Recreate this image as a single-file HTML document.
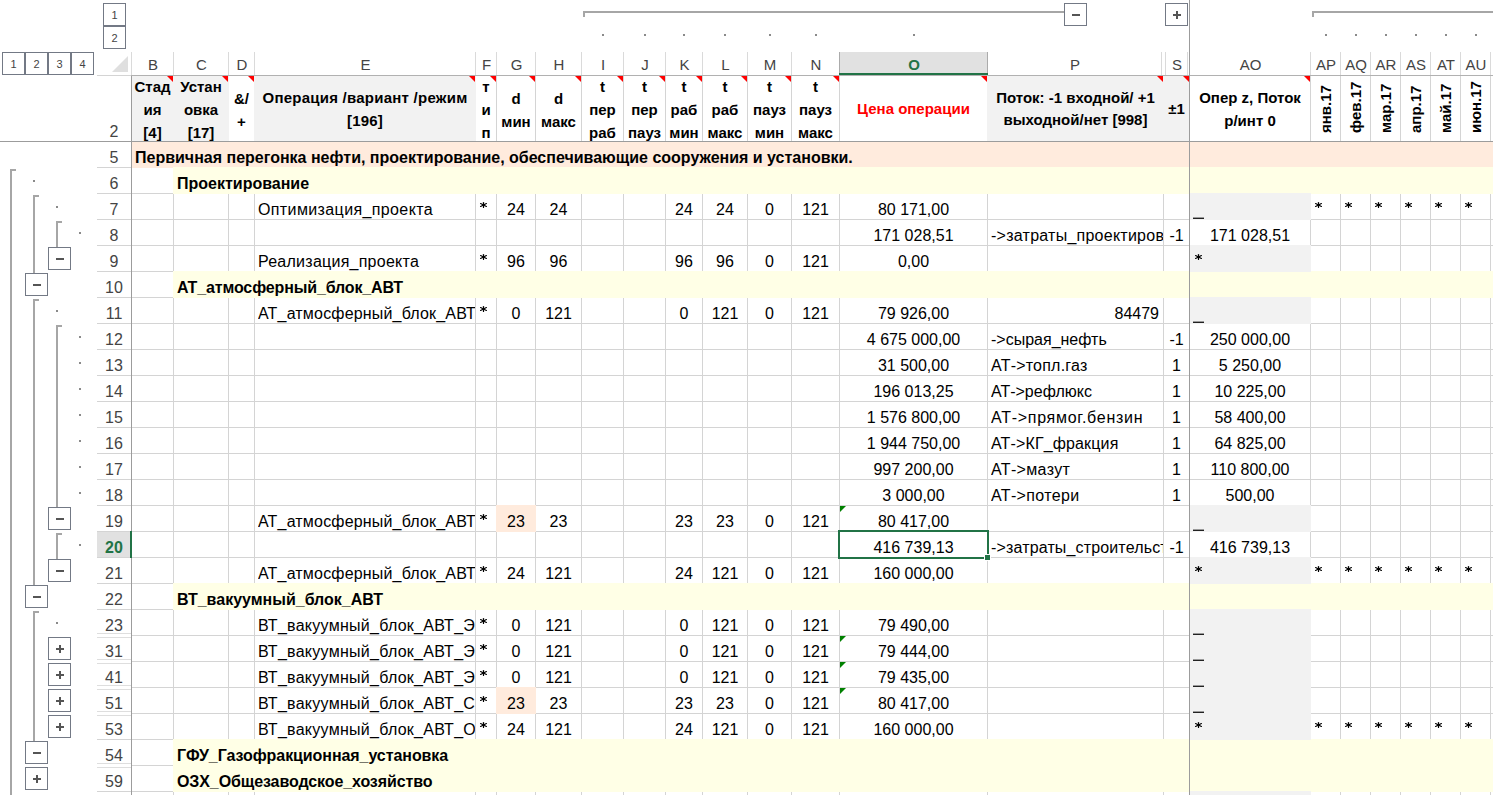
<!DOCTYPE html><html><head><meta charset="utf-8"><style>
*{margin:0;padding:0}
html,body{width:1493px;height:795px;overflow:hidden;background:#fff}
body{position:relative;font-family:"Liberation Sans", sans-serif}
body>div, body>svg{position:absolute}
.st{font-size:21px;line-height:20px;color:#000}
.t{font-size:16px;line-height:20px;white-space:pre;color:#000}
.h{display:flex;align-items:center;justify-content:center;text-align:center;font-weight:bold;white-space:pre}
.rot{font-size:15px;line-height:20px;font-weight:bold;white-space:pre;transform-origin:0 0;transform:rotate(-90deg)}
.ch{top:53px;height:23px;line-height:23px;font-size:15px;text-align:center}
.rh{left:97px;width:34px;height:20px;line-height:20px;font-size:16px;text-align:center;color:#444}
.ob{box-sizing:border-box;border:1px solid #737985;background:#fff;font-size:11px;line-height:21px;padding-top:1px;text-align:center;color:#444}
</style></head><body><div style="left:173px;top:76px;width:1px;height:719px;background:#d4d4d4"></div>
<div style="left:228px;top:76px;width:1px;height:719px;background:#d4d4d4"></div>
<div style="left:254px;top:76px;width:1px;height:719px;background:#d4d4d4"></div>
<div style="left:475px;top:76px;width:1px;height:719px;background:#d4d4d4"></div>
<div style="left:496px;top:76px;width:1px;height:719px;background:#d4d4d4"></div>
<div style="left:535px;top:76px;width:1px;height:719px;background:#d4d4d4"></div>
<div style="left:581px;top:76px;width:1px;height:719px;background:#d4d4d4"></div>
<div style="left:623px;top:76px;width:1px;height:719px;background:#d4d4d4"></div>
<div style="left:665px;top:76px;width:1px;height:719px;background:#d4d4d4"></div>
<div style="left:702px;top:76px;width:1px;height:719px;background:#d4d4d4"></div>
<div style="left:747px;top:76px;width:1px;height:719px;background:#d4d4d4"></div>
<div style="left:791px;top:76px;width:1px;height:719px;background:#d4d4d4"></div>
<div style="left:839px;top:76px;width:1px;height:719px;background:#d4d4d4"></div>
<div style="left:987px;top:76px;width:1px;height:719px;background:#d4d4d4"></div>
<div style="left:1163px;top:76px;width:1px;height:719px;background:#d4d4d4"></div>
<div style="left:1189px;top:76px;width:1px;height:719px;background:#d4d4d4"></div>
<div style="left:1310px;top:76px;width:1px;height:719px;background:#d4d4d4"></div>
<div style="left:1340px;top:76px;width:1px;height:719px;background:#d4d4d4"></div>
<div style="left:1370px;top:76px;width:1px;height:719px;background:#d4d4d4"></div>
<div style="left:1400px;top:76px;width:1px;height:719px;background:#d4d4d4"></div>
<div style="left:1430px;top:76px;width:1px;height:719px;background:#d4d4d4"></div>
<div style="left:1460px;top:76px;width:1px;height:719px;background:#d4d4d4"></div>
<div style="left:1490px;top:76px;width:1px;height:719px;background:#d4d4d4"></div>
<div style="left:1520px;top:76px;width:1px;height:719px;background:#d4d4d4"></div>
<div style="left:131px;top:167px;width:1362px;height:1px;background:#d4d4d4"></div>
<div style="left:131px;top:193px;width:1362px;height:1px;background:#d4d4d4"></div>
<div style="left:131px;top:219px;width:1362px;height:1px;background:#d4d4d4"></div>
<div style="left:131px;top:245px;width:1362px;height:1px;background:#d4d4d4"></div>
<div style="left:131px;top:271px;width:1362px;height:1px;background:#d4d4d4"></div>
<div style="left:131px;top:297px;width:1362px;height:1px;background:#d4d4d4"></div>
<div style="left:131px;top:323px;width:1362px;height:1px;background:#d4d4d4"></div>
<div style="left:131px;top:349px;width:1362px;height:1px;background:#d4d4d4"></div>
<div style="left:131px;top:375px;width:1362px;height:1px;background:#d4d4d4"></div>
<div style="left:131px;top:401px;width:1362px;height:1px;background:#d4d4d4"></div>
<div style="left:131px;top:427px;width:1362px;height:1px;background:#d4d4d4"></div>
<div style="left:131px;top:453px;width:1362px;height:1px;background:#d4d4d4"></div>
<div style="left:131px;top:479px;width:1362px;height:1px;background:#d4d4d4"></div>
<div style="left:131px;top:505px;width:1362px;height:1px;background:#d4d4d4"></div>
<div style="left:131px;top:531px;width:1362px;height:1px;background:#d4d4d4"></div>
<div style="left:131px;top:557px;width:1362px;height:1px;background:#d4d4d4"></div>
<div style="left:131px;top:583px;width:1362px;height:1px;background:#d4d4d4"></div>
<div style="left:131px;top:609px;width:1362px;height:1px;background:#d4d4d4"></div>
<div style="left:131px;top:635px;width:1362px;height:1px;background:#d4d4d4"></div>
<div style="left:131px;top:661px;width:1362px;height:1px;background:#d4d4d4"></div>
<div style="left:131px;top:687px;width:1362px;height:1px;background:#d4d4d4"></div>
<div style="left:131px;top:713px;width:1362px;height:1px;background:#d4d4d4"></div>
<div style="left:131px;top:739px;width:1362px;height:1px;background:#d4d4d4"></div>
<div style="left:131px;top:765px;width:1362px;height:1px;background:#d4d4d4"></div>
<div style="left:131px;top:791px;width:1362px;height:1px;background:#d4d4d4"></div>
<div style="left:131px;top:817px;width:1362px;height:1px;background:#d4d4d4"></div>
<div style="left:131px;top:76px;width:98px;height:65px;background:#f2f2f2"></div>
<div style="left:254px;top:76px;width:222px;height:65px;background:#f2f2f2"></div>
<div style="left:987px;top:76px;width:203px;height:65px;background:#f2f2f2"></div>
<div style="left:132px;top:141px;width:1361px;height:27px;background:#ffebdd"></div>
<div style="left:173px;top:167px;width:1348px;height:27px;background:#ffffe6"></div>
<div style="left:173px;top:271px;width:1348px;height:27px;background:#ffffe6"></div>
<div style="left:173px;top:583px;width:1348px;height:27px;background:#ffffe6"></div>
<div style="left:173px;top:739px;width:1348px;height:27px;background:#ffffe6"></div>
<div style="left:173px;top:765px;width:1348px;height:27px;background:#ffffe6"></div>
<div style="left:1189px;top:193px;width:122px;height:27px;background:#f2f2f2"></div>
<div style="left:1189px;top:245px;width:122px;height:27px;background:#f2f2f2"></div>
<div style="left:1189px;top:297px;width:122px;height:27px;background:#f2f2f2"></div>
<div style="left:1189px;top:505px;width:122px;height:27px;background:#f2f2f2"></div>
<div style="left:1189px;top:557px;width:122px;height:27px;background:#f2f2f2"></div>
<div style="left:1189px;top:713px;width:122px;height:27px;background:#f2f2f2"></div>
<div style="left:1189px;top:609px;width:122px;height:105px;background:#f2f2f2"></div>
<div style="left:1189px;top:791px;width:122px;height:27px;background:#f2f2f2"></div>
<div style="left:496px;top:505px;width:40px;height:27px;background:#ffebdd"></div>
<div style="left:496px;top:687px;width:40px;height:27px;background:#ffebdd"></div>
<div class="t" style="left:135px;top:148px;font-weight:bold;">Первичная перегонка нефти, проектирование, обеспечивающие сооружения и установки.</div>
<div class="t" style="left:177px;top:174px;font-weight:bold;letter-spacing:0px">Проектирование</div>
<div class="t" style="left:177px;top:278px;font-weight:bold;letter-spacing:-0.14px">АТ_атмосферный_блок_АВТ</div>
<div class="t" style="left:177px;top:590px;font-weight:bold;letter-spacing:0px">ВТ_вакуумный_блок_АВТ</div>
<div class="t" style="left:177px;top:746px;font-weight:bold;letter-spacing:-0.07px">ГФУ_Газофракционная_установка</div>
<div class="t" style="left:177px;top:772px;font-weight:bold;letter-spacing:-0.1px">ОЗХ_Общезаводское_хозяйство</div>
<div class="t" style="left:258px;top:200px;width:217px;overflow:hidden;letter-spacing:0.38px;">Оптимизация_проекта</div>
<svg style="position:absolute;left:478px;top:200px" width="11" height="10"><g stroke="#000" stroke-width="1.2" stroke-linecap="round"><line x1="5.5" y1="2.5" x2="5.5" y2="7.5"/><line x1="2.6" y1="3.55" x2="8.4" y2="6.45"/><line x1="2.6" y1="6.45" x2="8.4" y2="3.55"/></g></svg>
<div class="t" style="left:496px;top:200px;width:40px;text-align:center;">24</div>
<div class="t" style="left:535px;top:200px;width:47px;text-align:center;">24</div>
<div class="t" style="left:665px;top:200px;width:38px;text-align:center;">24</div>
<div class="t" style="left:702px;top:200px;width:46px;text-align:center;">24</div>
<div class="t" style="left:747px;top:200px;width:45px;text-align:center;">0</div>
<div class="t" style="left:791px;top:200px;width:49px;text-align:center;">121</div>
<div class="t" style="left:839px;top:200px;width:149px;text-align:center;">80 171,00</div>
<div style="left:1193px;top:217px;width:11px;height:1px;background:#9a9a9a"></div>
<div style="left:1193px;top:218px;width:11px;height:1px;background:#222"></div>
<div class="t" style="left:258px;top:252px;width:217px;overflow:hidden;letter-spacing:0.25px;">Реализация_проекта</div>
<svg style="position:absolute;left:478px;top:252px" width="11" height="10"><g stroke="#000" stroke-width="1.2" stroke-linecap="round"><line x1="5.5" y1="2.5" x2="5.5" y2="7.5"/><line x1="2.6" y1="3.55" x2="8.4" y2="6.45"/><line x1="2.6" y1="6.45" x2="8.4" y2="3.55"/></g></svg>
<div class="t" style="left:496px;top:252px;width:40px;text-align:center;">96</div>
<div class="t" style="left:535px;top:252px;width:47px;text-align:center;">96</div>
<div class="t" style="left:665px;top:252px;width:38px;text-align:center;">96</div>
<div class="t" style="left:702px;top:252px;width:46px;text-align:center;">96</div>
<div class="t" style="left:747px;top:252px;width:45px;text-align:center;">0</div>
<div class="t" style="left:791px;top:252px;width:49px;text-align:center;">121</div>
<div class="t" style="left:839px;top:252px;width:149px;text-align:center;">0,00</div>
<svg style="position:absolute;left:1193px;top:252px" width="11" height="10"><g stroke="#000" stroke-width="1.2" stroke-linecap="round"><line x1="5.5" y1="2.5" x2="5.5" y2="7.5"/><line x1="2.6" y1="3.55" x2="8.4" y2="6.45"/><line x1="2.6" y1="6.45" x2="8.4" y2="3.55"/></g></svg>
<div class="t" style="left:258px;top:304px;width:217px;overflow:hidden;letter-spacing:0.18px;">АТ_атмосферный_блок_АВТ</div>
<svg style="position:absolute;left:478px;top:304px" width="11" height="10"><g stroke="#000" stroke-width="1.2" stroke-linecap="round"><line x1="5.5" y1="2.5" x2="5.5" y2="7.5"/><line x1="2.6" y1="3.55" x2="8.4" y2="6.45"/><line x1="2.6" y1="6.45" x2="8.4" y2="3.55"/></g></svg>
<div class="t" style="left:496px;top:304px;width:40px;text-align:center;">0</div>
<div class="t" style="left:535px;top:304px;width:47px;text-align:center;">121</div>
<div class="t" style="left:665px;top:304px;width:38px;text-align:center;">0</div>
<div class="t" style="left:702px;top:304px;width:46px;text-align:center;">121</div>
<div class="t" style="left:747px;top:304px;width:45px;text-align:center;">0</div>
<div class="t" style="left:791px;top:304px;width:49px;text-align:center;">121</div>
<div class="t" style="left:839px;top:304px;width:149px;text-align:center;">79 926,00</div>
<div style="left:1193px;top:321px;width:11px;height:1px;background:#9a9a9a"></div>
<div style="left:1193px;top:322px;width:11px;height:1px;background:#222"></div>
<div class="t" style="left:258px;top:512px;width:217px;overflow:hidden;letter-spacing:0.18px;">АТ_атмосферный_блок_АВТ</div>
<svg style="position:absolute;left:478px;top:512px" width="11" height="10"><g stroke="#000" stroke-width="1.2" stroke-linecap="round"><line x1="5.5" y1="2.5" x2="5.5" y2="7.5"/><line x1="2.6" y1="3.55" x2="8.4" y2="6.45"/><line x1="2.6" y1="6.45" x2="8.4" y2="3.55"/></g></svg>
<div class="t" style="left:496px;top:512px;width:40px;text-align:center;">23</div>
<div class="t" style="left:535px;top:512px;width:47px;text-align:center;">23</div>
<div class="t" style="left:665px;top:512px;width:38px;text-align:center;">23</div>
<div class="t" style="left:702px;top:512px;width:46px;text-align:center;">23</div>
<div class="t" style="left:747px;top:512px;width:45px;text-align:center;">0</div>
<div class="t" style="left:791px;top:512px;width:49px;text-align:center;">121</div>
<div class="t" style="left:839px;top:512px;width:149px;text-align:center;">80 417,00</div>
<div style="left:1193px;top:529px;width:11px;height:1px;background:#9a9a9a"></div>
<div style="left:1193px;top:530px;width:11px;height:1px;background:#222"></div>
<div class="t" style="left:258px;top:564px;width:217px;overflow:hidden;letter-spacing:0.18px;">АТ_атмосферный_блок_АВТ</div>
<svg style="position:absolute;left:478px;top:564px" width="11" height="10"><g stroke="#000" stroke-width="1.2" stroke-linecap="round"><line x1="5.5" y1="2.5" x2="5.5" y2="7.5"/><line x1="2.6" y1="3.55" x2="8.4" y2="6.45"/><line x1="2.6" y1="6.45" x2="8.4" y2="3.55"/></g></svg>
<div class="t" style="left:496px;top:564px;width:40px;text-align:center;">24</div>
<div class="t" style="left:535px;top:564px;width:47px;text-align:center;">121</div>
<div class="t" style="left:665px;top:564px;width:38px;text-align:center;">24</div>
<div class="t" style="left:702px;top:564px;width:46px;text-align:center;">121</div>
<div class="t" style="left:747px;top:564px;width:45px;text-align:center;">0</div>
<div class="t" style="left:791px;top:564px;width:49px;text-align:center;">121</div>
<div class="t" style="left:839px;top:564px;width:149px;text-align:center;">160 000,00</div>
<svg style="position:absolute;left:1193px;top:564px" width="11" height="10"><g stroke="#000" stroke-width="1.2" stroke-linecap="round"><line x1="5.5" y1="2.5" x2="5.5" y2="7.5"/><line x1="2.6" y1="3.55" x2="8.4" y2="6.45"/><line x1="2.6" y1="6.45" x2="8.4" y2="3.55"/></g></svg>
<div class="t" style="left:258px;top:616px;width:217px;overflow:hidden;letter-spacing:0.27px;">ВТ_вакуумный_блок_АВТ_Э</div>
<svg style="position:absolute;left:478px;top:616px" width="11" height="10"><g stroke="#000" stroke-width="1.2" stroke-linecap="round"><line x1="5.5" y1="2.5" x2="5.5" y2="7.5"/><line x1="2.6" y1="3.55" x2="8.4" y2="6.45"/><line x1="2.6" y1="6.45" x2="8.4" y2="3.55"/></g></svg>
<div class="t" style="left:496px;top:616px;width:40px;text-align:center;">0</div>
<div class="t" style="left:535px;top:616px;width:47px;text-align:center;">121</div>
<div class="t" style="left:665px;top:616px;width:38px;text-align:center;">0</div>
<div class="t" style="left:702px;top:616px;width:46px;text-align:center;">121</div>
<div class="t" style="left:747px;top:616px;width:45px;text-align:center;">0</div>
<div class="t" style="left:791px;top:616px;width:49px;text-align:center;">121</div>
<div class="t" style="left:839px;top:616px;width:149px;text-align:center;">79 490,00</div>
<div style="left:1193px;top:633px;width:11px;height:1px;background:#9a9a9a"></div>
<div style="left:1193px;top:634px;width:11px;height:1px;background:#222"></div>
<div class="t" style="left:258px;top:642px;width:217px;overflow:hidden;letter-spacing:0.27px;">ВТ_вакуумный_блок_АВТ_Э</div>
<svg style="position:absolute;left:478px;top:642px" width="11" height="10"><g stroke="#000" stroke-width="1.2" stroke-linecap="round"><line x1="5.5" y1="2.5" x2="5.5" y2="7.5"/><line x1="2.6" y1="3.55" x2="8.4" y2="6.45"/><line x1="2.6" y1="6.45" x2="8.4" y2="3.55"/></g></svg>
<div class="t" style="left:496px;top:642px;width:40px;text-align:center;">0</div>
<div class="t" style="left:535px;top:642px;width:47px;text-align:center;">121</div>
<div class="t" style="left:665px;top:642px;width:38px;text-align:center;">0</div>
<div class="t" style="left:702px;top:642px;width:46px;text-align:center;">121</div>
<div class="t" style="left:747px;top:642px;width:45px;text-align:center;">0</div>
<div class="t" style="left:791px;top:642px;width:49px;text-align:center;">121</div>
<div class="t" style="left:839px;top:642px;width:149px;text-align:center;">79 444,00</div>
<div style="left:1193px;top:659px;width:11px;height:1px;background:#9a9a9a"></div>
<div style="left:1193px;top:660px;width:11px;height:1px;background:#222"></div>
<div class="t" style="left:258px;top:668px;width:217px;overflow:hidden;letter-spacing:0.27px;">ВТ_вакуумный_блок_АВТ_Э</div>
<svg style="position:absolute;left:478px;top:668px" width="11" height="10"><g stroke="#000" stroke-width="1.2" stroke-linecap="round"><line x1="5.5" y1="2.5" x2="5.5" y2="7.5"/><line x1="2.6" y1="3.55" x2="8.4" y2="6.45"/><line x1="2.6" y1="6.45" x2="8.4" y2="3.55"/></g></svg>
<div class="t" style="left:496px;top:668px;width:40px;text-align:center;">0</div>
<div class="t" style="left:535px;top:668px;width:47px;text-align:center;">121</div>
<div class="t" style="left:665px;top:668px;width:38px;text-align:center;">0</div>
<div class="t" style="left:702px;top:668px;width:46px;text-align:center;">121</div>
<div class="t" style="left:747px;top:668px;width:45px;text-align:center;">0</div>
<div class="t" style="left:791px;top:668px;width:49px;text-align:center;">121</div>
<div class="t" style="left:839px;top:668px;width:149px;text-align:center;">79 435,00</div>
<div style="left:1193px;top:685px;width:11px;height:1px;background:#9a9a9a"></div>
<div style="left:1193px;top:686px;width:11px;height:1px;background:#222"></div>
<div class="t" style="left:258px;top:694px;width:217px;overflow:hidden;letter-spacing:0.27px;">ВТ_вакуумный_блок_АВТ_С</div>
<svg style="position:absolute;left:478px;top:694px" width="11" height="10"><g stroke="#000" stroke-width="1.2" stroke-linecap="round"><line x1="5.5" y1="2.5" x2="5.5" y2="7.5"/><line x1="2.6" y1="3.55" x2="8.4" y2="6.45"/><line x1="2.6" y1="6.45" x2="8.4" y2="3.55"/></g></svg>
<div class="t" style="left:496px;top:694px;width:40px;text-align:center;">23</div>
<div class="t" style="left:535px;top:694px;width:47px;text-align:center;">23</div>
<div class="t" style="left:665px;top:694px;width:38px;text-align:center;">23</div>
<div class="t" style="left:702px;top:694px;width:46px;text-align:center;">23</div>
<div class="t" style="left:747px;top:694px;width:45px;text-align:center;">0</div>
<div class="t" style="left:791px;top:694px;width:49px;text-align:center;">121</div>
<div class="t" style="left:839px;top:694px;width:149px;text-align:center;">80 417,00</div>
<div style="left:1193px;top:711px;width:11px;height:1px;background:#9a9a9a"></div>
<div style="left:1193px;top:712px;width:11px;height:1px;background:#222"></div>
<div class="t" style="left:258px;top:720px;width:217px;overflow:hidden;letter-spacing:0.27px;">ВТ_вакуумный_блок_АВТ_О</div>
<svg style="position:absolute;left:478px;top:720px" width="11" height="10"><g stroke="#000" stroke-width="1.2" stroke-linecap="round"><line x1="5.5" y1="2.5" x2="5.5" y2="7.5"/><line x1="2.6" y1="3.55" x2="8.4" y2="6.45"/><line x1="2.6" y1="6.45" x2="8.4" y2="3.55"/></g></svg>
<div class="t" style="left:496px;top:720px;width:40px;text-align:center;">24</div>
<div class="t" style="left:535px;top:720px;width:47px;text-align:center;">121</div>
<div class="t" style="left:665px;top:720px;width:38px;text-align:center;">24</div>
<div class="t" style="left:702px;top:720px;width:46px;text-align:center;">121</div>
<div class="t" style="left:747px;top:720px;width:45px;text-align:center;">0</div>
<div class="t" style="left:791px;top:720px;width:49px;text-align:center;">121</div>
<div class="t" style="left:839px;top:720px;width:149px;text-align:center;">160 000,00</div>
<svg style="position:absolute;left:1193px;top:720px" width="11" height="10"><g stroke="#000" stroke-width="1.2" stroke-linecap="round"><line x1="5.5" y1="2.5" x2="5.5" y2="7.5"/><line x1="2.6" y1="3.55" x2="8.4" y2="6.45"/><line x1="2.6" y1="6.45" x2="8.4" y2="3.55"/></g></svg>
<div class="t" style="left:987px;top:304px;width:172px;text-align:right;">84479</div>
<svg style="position:absolute;left:1313px;top:200px" width="11" height="10"><g stroke="#000" stroke-width="1.2" stroke-linecap="round"><line x1="5.5" y1="2.5" x2="5.5" y2="7.5"/><line x1="2.6" y1="3.55" x2="8.4" y2="6.45"/><line x1="2.6" y1="6.45" x2="8.4" y2="3.55"/></g></svg>
<svg style="position:absolute;left:1343px;top:200px" width="11" height="10"><g stroke="#000" stroke-width="1.2" stroke-linecap="round"><line x1="5.5" y1="2.5" x2="5.5" y2="7.5"/><line x1="2.6" y1="3.55" x2="8.4" y2="6.45"/><line x1="2.6" y1="6.45" x2="8.4" y2="3.55"/></g></svg>
<svg style="position:absolute;left:1373px;top:200px" width="11" height="10"><g stroke="#000" stroke-width="1.2" stroke-linecap="round"><line x1="5.5" y1="2.5" x2="5.5" y2="7.5"/><line x1="2.6" y1="3.55" x2="8.4" y2="6.45"/><line x1="2.6" y1="6.45" x2="8.4" y2="3.55"/></g></svg>
<svg style="position:absolute;left:1403px;top:200px" width="11" height="10"><g stroke="#000" stroke-width="1.2" stroke-linecap="round"><line x1="5.5" y1="2.5" x2="5.5" y2="7.5"/><line x1="2.6" y1="3.55" x2="8.4" y2="6.45"/><line x1="2.6" y1="6.45" x2="8.4" y2="3.55"/></g></svg>
<svg style="position:absolute;left:1433px;top:200px" width="11" height="10"><g stroke="#000" stroke-width="1.2" stroke-linecap="round"><line x1="5.5" y1="2.5" x2="5.5" y2="7.5"/><line x1="2.6" y1="3.55" x2="8.4" y2="6.45"/><line x1="2.6" y1="6.45" x2="8.4" y2="3.55"/></g></svg>
<svg style="position:absolute;left:1463px;top:200px" width="11" height="10"><g stroke="#000" stroke-width="1.2" stroke-linecap="round"><line x1="5.5" y1="2.5" x2="5.5" y2="7.5"/><line x1="2.6" y1="3.55" x2="8.4" y2="6.45"/><line x1="2.6" y1="6.45" x2="8.4" y2="3.55"/></g></svg>
<svg style="position:absolute;left:1313px;top:564px" width="11" height="10"><g stroke="#000" stroke-width="1.2" stroke-linecap="round"><line x1="5.5" y1="2.5" x2="5.5" y2="7.5"/><line x1="2.6" y1="3.55" x2="8.4" y2="6.45"/><line x1="2.6" y1="6.45" x2="8.4" y2="3.55"/></g></svg>
<svg style="position:absolute;left:1343px;top:564px" width="11" height="10"><g stroke="#000" stroke-width="1.2" stroke-linecap="round"><line x1="5.5" y1="2.5" x2="5.5" y2="7.5"/><line x1="2.6" y1="3.55" x2="8.4" y2="6.45"/><line x1="2.6" y1="6.45" x2="8.4" y2="3.55"/></g></svg>
<svg style="position:absolute;left:1373px;top:564px" width="11" height="10"><g stroke="#000" stroke-width="1.2" stroke-linecap="round"><line x1="5.5" y1="2.5" x2="5.5" y2="7.5"/><line x1="2.6" y1="3.55" x2="8.4" y2="6.45"/><line x1="2.6" y1="6.45" x2="8.4" y2="3.55"/></g></svg>
<svg style="position:absolute;left:1403px;top:564px" width="11" height="10"><g stroke="#000" stroke-width="1.2" stroke-linecap="round"><line x1="5.5" y1="2.5" x2="5.5" y2="7.5"/><line x1="2.6" y1="3.55" x2="8.4" y2="6.45"/><line x1="2.6" y1="6.45" x2="8.4" y2="3.55"/></g></svg>
<svg style="position:absolute;left:1433px;top:564px" width="11" height="10"><g stroke="#000" stroke-width="1.2" stroke-linecap="round"><line x1="5.5" y1="2.5" x2="5.5" y2="7.5"/><line x1="2.6" y1="3.55" x2="8.4" y2="6.45"/><line x1="2.6" y1="6.45" x2="8.4" y2="3.55"/></g></svg>
<svg style="position:absolute;left:1463px;top:564px" width="11" height="10"><g stroke="#000" stroke-width="1.2" stroke-linecap="round"><line x1="5.5" y1="2.5" x2="5.5" y2="7.5"/><line x1="2.6" y1="3.55" x2="8.4" y2="6.45"/><line x1="2.6" y1="6.45" x2="8.4" y2="3.55"/></g></svg>
<svg style="position:absolute;left:1313px;top:720px" width="11" height="10"><g stroke="#000" stroke-width="1.2" stroke-linecap="round"><line x1="5.5" y1="2.5" x2="5.5" y2="7.5"/><line x1="2.6" y1="3.55" x2="8.4" y2="6.45"/><line x1="2.6" y1="6.45" x2="8.4" y2="3.55"/></g></svg>
<svg style="position:absolute;left:1343px;top:720px" width="11" height="10"><g stroke="#000" stroke-width="1.2" stroke-linecap="round"><line x1="5.5" y1="2.5" x2="5.5" y2="7.5"/><line x1="2.6" y1="3.55" x2="8.4" y2="6.45"/><line x1="2.6" y1="6.45" x2="8.4" y2="3.55"/></g></svg>
<svg style="position:absolute;left:1373px;top:720px" width="11" height="10"><g stroke="#000" stroke-width="1.2" stroke-linecap="round"><line x1="5.5" y1="2.5" x2="5.5" y2="7.5"/><line x1="2.6" y1="3.55" x2="8.4" y2="6.45"/><line x1="2.6" y1="6.45" x2="8.4" y2="3.55"/></g></svg>
<svg style="position:absolute;left:1403px;top:720px" width="11" height="10"><g stroke="#000" stroke-width="1.2" stroke-linecap="round"><line x1="5.5" y1="2.5" x2="5.5" y2="7.5"/><line x1="2.6" y1="3.55" x2="8.4" y2="6.45"/><line x1="2.6" y1="6.45" x2="8.4" y2="3.55"/></g></svg>
<svg style="position:absolute;left:1433px;top:720px" width="11" height="10"><g stroke="#000" stroke-width="1.2" stroke-linecap="round"><line x1="5.5" y1="2.5" x2="5.5" y2="7.5"/><line x1="2.6" y1="3.55" x2="8.4" y2="6.45"/><line x1="2.6" y1="6.45" x2="8.4" y2="3.55"/></g></svg>
<svg style="position:absolute;left:1463px;top:720px" width="11" height="10"><g stroke="#000" stroke-width="1.2" stroke-linecap="round"><line x1="5.5" y1="2.5" x2="5.5" y2="7.5"/><line x1="2.6" y1="3.55" x2="8.4" y2="6.45"/><line x1="2.6" y1="6.45" x2="8.4" y2="3.55"/></g></svg>
<div class="t" style="left:839px;top:226px;width:149px;text-align:center;">171 028,51</div>
<div class="t" style="left:991px;top:226px;width:172px;overflow:hidden;letter-spacing:0.25px;">-&gt;затраты_проектирование</div>
<div class="t" style="left:1163px;top:226px;width:27px;text-align:center;">-1</div>
<div class="t" style="left:1189px;top:226px;width:122px;text-align:center;">171 028,51</div>
<div class="t" style="left:839px;top:330px;width:149px;text-align:center;">4 675 000,00</div>
<div class="t" style="left:991px;top:330px;width:172px;overflow:hidden;">-&gt;сырая_нефть</div>
<div class="t" style="left:1163px;top:330px;width:27px;text-align:center;">-1</div>
<div class="t" style="left:1189px;top:330px;width:122px;text-align:center;">250 000,00</div>
<div class="t" style="left:839px;top:356px;width:149px;text-align:center;">31 500,00</div>
<div class="t" style="left:991px;top:356px;width:172px;overflow:hidden;letter-spacing:0.22px;">АТ-&gt;топл.газ</div>
<div class="t" style="left:1163px;top:356px;width:27px;text-align:center;">1</div>
<div class="t" style="left:1189px;top:356px;width:122px;text-align:center;">5 250,00</div>
<div class="t" style="left:839px;top:382px;width:149px;text-align:center;">196 013,25</div>
<div class="t" style="left:991px;top:382px;width:172px;overflow:hidden;">АТ-&gt;рефлюкс</div>
<div class="t" style="left:1163px;top:382px;width:27px;text-align:center;">1</div>
<div class="t" style="left:1189px;top:382px;width:122px;text-align:center;">10 225,00</div>
<div class="t" style="left:839px;top:408px;width:149px;text-align:center;">1 576 800,00</div>
<div class="t" style="left:991px;top:408px;width:172px;overflow:hidden;letter-spacing:0.72px;">АТ-&gt;прямог.бензин</div>
<div class="t" style="left:1163px;top:408px;width:27px;text-align:center;">1</div>
<div class="t" style="left:1189px;top:408px;width:122px;text-align:center;">58 400,00</div>
<div class="t" style="left:839px;top:434px;width:149px;text-align:center;">1 944 750,00</div>
<div class="t" style="left:991px;top:434px;width:172px;overflow:hidden;letter-spacing:0.14px;">АТ-&gt;КГ_фракция</div>
<div class="t" style="left:1163px;top:434px;width:27px;text-align:center;">1</div>
<div class="t" style="left:1189px;top:434px;width:122px;text-align:center;">64 825,00</div>
<div class="t" style="left:839px;top:460px;width:149px;text-align:center;">997 200,00</div>
<div class="t" style="left:991px;top:460px;width:172px;overflow:hidden;letter-spacing:0.35px;">АТ-&gt;мазут</div>
<div class="t" style="left:1163px;top:460px;width:27px;text-align:center;">1</div>
<div class="t" style="left:1189px;top:460px;width:122px;text-align:center;">110 800,00</div>
<div class="t" style="left:839px;top:486px;width:149px;text-align:center;">3 000,00</div>
<div class="t" style="left:991px;top:486px;width:172px;overflow:hidden;letter-spacing:0.35px;">АТ-&gt;потери</div>
<div class="t" style="left:1163px;top:486px;width:27px;text-align:center;">1</div>
<div class="t" style="left:1189px;top:486px;width:122px;text-align:center;">500,00</div>
<div class="t" style="left:839px;top:538px;width:149px;text-align:center;">416 739,13</div>
<div class="t" style="left:991px;top:538px;width:172px;overflow:hidden;letter-spacing:0.15px;">-&gt;затраты_строительство</div>
<div class="t" style="left:1163px;top:538px;width:27px;text-align:center;">-1</div>
<div class="t" style="left:1189px;top:538px;width:122px;text-align:center;">416 739,13</div>
<div class="h" style="left:131px;top:77px;width:43px;height:65px;font-size:15px;line-height:23px;color:#000;"><div>Стад<br>ия<br>[4]</div></div>
<div class="h" style="left:173px;top:77px;width:56px;height:65px;font-size:15px;line-height:23px;color:#000;"><div>Устан<br>овка<br>[17]</div></div>
<div class="h" style="left:228px;top:77px;width:27px;height:65px;font-size:15px;line-height:23px;color:#000;"><div>&amp;/<br>+</div></div>
<div class="h" style="left:254px;top:77px;width:222px;height:65px;font-size:15px;line-height:22.5px;color:#000;letter-spacing:0.24px"><div>Операция /вариант /режим<br>[196]</div></div>
<div class="h" style="left:475px;top:77px;width:22px;height:65px;font-size:15px;line-height:23px;color:#000;"><div>т<br>и<br>п</div></div>
<div class="h" style="left:496px;top:77px;width:40px;height:65px;font-size:15px;line-height:23px;color:#000;"><div>d<br>мин</div></div>
<div class="h" style="left:535px;top:77px;width:47px;height:65px;font-size:15px;line-height:23px;color:#000;"><div>d<br>макс</div></div>
<div class="h" style="left:581px;top:77px;width:43px;height:65px;font-size:15px;line-height:23px;color:#000;"><div>t<br>пер<br>раб</div></div>
<div class="h" style="left:623px;top:77px;width:43px;height:65px;font-size:15px;line-height:23px;color:#000;"><div>t<br>пер<br>пауз</div></div>
<div class="h" style="left:665px;top:77px;width:38px;height:65px;font-size:15px;line-height:23px;color:#000;"><div>t<br>раб<br>мин</div></div>
<div class="h" style="left:702px;top:77px;width:46px;height:65px;font-size:15px;line-height:23px;color:#000;"><div>t<br>раб<br>макс</div></div>
<div class="h" style="left:747px;top:77px;width:45px;height:65px;font-size:15px;line-height:23px;color:#000;"><div>t<br>пауз<br>мин</div></div>
<div class="h" style="left:791px;top:77px;width:49px;height:65px;font-size:15px;line-height:23px;color:#000;"><div>t<br>пауз<br>макс</div></div>
<div class="h" style="left:839px;top:76px;width:149px;height:65px;font-size:15px;line-height:23px;color:#ff0000;"><div>Цена операции</div></div>
<div class="h" style="left:987px;top:76px;width:177px;height:65px;font-size:15px;line-height:21.5px;color:#000;"><div>Поток: -1 входной/ +1<br>выходной/нет [998]</div></div>
<div class="h" style="left:1163px;top:76px;width:27px;height:65px;font-size:15px;line-height:23px;color:#000;"><div>±1</div></div>
<div class="h" style="left:1189px;top:76px;width:122px;height:65px;font-size:15px;line-height:23px;color:#000;"><div>Опер z, Поток<br>р/инт 0</div></div>
<div class="rot" style="left:1316px;top:133px;">янв.17</div>
<div class="rot" style="left:1346px;top:133px;">фев.17</div>
<div class="rot" style="left:1376px;top:133px;">мар.17</div>
<div class="rot" style="left:1406px;top:133px;">апр.17</div>
<div class="rot" style="left:1436px;top:133px;">май.17</div>
<div class="rot" style="left:1466px;top:133px;">июн.17</div>
<div style="left:0px;top:52px;width:1493px;height:23px;background:#fff"></div>
<div style="left:839px;top:52px;width:148px;height:23px;background:#e1e1e1"></div>
<div style="left:173px;top:52px;width:1px;height:23px;background:#dadada"></div>
<div style="left:228px;top:52px;width:1px;height:23px;background:#dadada"></div>
<div style="left:254px;top:52px;width:1px;height:23px;background:#dadada"></div>
<div style="left:475px;top:52px;width:1px;height:23px;background:#dadada"></div>
<div style="left:496px;top:52px;width:1px;height:23px;background:#dadada"></div>
<div style="left:535px;top:52px;width:1px;height:23px;background:#dadada"></div>
<div style="left:581px;top:52px;width:1px;height:23px;background:#dadada"></div>
<div style="left:623px;top:52px;width:1px;height:23px;background:#dadada"></div>
<div style="left:665px;top:52px;width:1px;height:23px;background:#dadada"></div>
<div style="left:702px;top:52px;width:1px;height:23px;background:#dadada"></div>
<div style="left:747px;top:52px;width:1px;height:23px;background:#dadada"></div>
<div style="left:791px;top:52px;width:1px;height:23px;background:#dadada"></div>
<div style="left:839px;top:52px;width:1px;height:23px;background:#dadada"></div>
<div style="left:987px;top:52px;width:1px;height:23px;background:#dadada"></div>
<div style="left:1310px;top:52px;width:1px;height:23px;background:#dadada"></div>
<div style="left:1340px;top:52px;width:1px;height:23px;background:#dadada"></div>
<div style="left:1370px;top:52px;width:1px;height:23px;background:#dadada"></div>
<div style="left:1400px;top:52px;width:1px;height:23px;background:#dadada"></div>
<div style="left:1430px;top:52px;width:1px;height:23px;background:#dadada"></div>
<div style="left:1460px;top:52px;width:1px;height:23px;background:#dadada"></div>
<div style="left:1490px;top:52px;width:1px;height:23px;background:#dadada"></div>
<div style="left:1520px;top:52px;width:1px;height:23px;background:#dadada"></div>
<div style="left:1187px;top:52px;width:1px;height:23px;background:#dadada"></div>
<div style="left:131px;top:52px;width:1px;height:23px;background:#dadada"></div>
<div style="left:839px;top:52px;width:1px;height:23px;background:#ababab"></div>
<div style="left:987px;top:52px;width:1px;height:23px;background:#ababab"></div>
<div style="left:1161px;top:52px;width:1px;height:23px;background:#dadada"></div>
<div style="left:1165px;top:52px;width:1px;height:23px;background:#dadada"></div>
<div class="ch" style="left:132px;width:42px;color:#444;">B</div>
<div class="ch" style="left:174px;width:55px;color:#444;">C</div>
<div class="ch" style="left:229px;width:26px;color:#444;">D</div>
<div class="ch" style="left:255px;width:221px;color:#444;">E</div>
<div class="ch" style="left:476px;width:21px;color:#444;">F</div>
<div class="ch" style="left:497px;width:39px;color:#444;">G</div>
<div class="ch" style="left:536px;width:46px;color:#444;">H</div>
<div class="ch" style="left:582px;width:42px;color:#444;">I</div>
<div class="ch" style="left:624px;width:42px;color:#444;">J</div>
<div class="ch" style="left:666px;width:37px;color:#444;">K</div>
<div class="ch" style="left:703px;width:45px;color:#444;">L</div>
<div class="ch" style="left:748px;width:44px;color:#444;">M</div>
<div class="ch" style="left:792px;width:48px;color:#444;">N</div>
<div class="ch" style="left:840px;width:148px;color:#217346;font-weight:bold;">O</div>
<div class="ch" style="left:988px;width:174px;color:#444;">P</div>
<div class="ch" style="left:1166px;width:22px;color:#444;">S</div>
<div class="ch" style="left:1190px;width:121px;color:#444;">AO</div>
<div class="ch" style="left:1311px;width:30px;color:#444;">AP</div>
<div class="ch" style="left:1341px;width:30px;color:#444;">AQ</div>
<div class="ch" style="left:1371px;width:30px;color:#444;">AR</div>
<div class="ch" style="left:1401px;width:30px;color:#444;">AS</div>
<div class="ch" style="left:1431px;width:30px;color:#444;">AT</div>
<div class="ch" style="left:1461px;width:30px;color:#444;">AU</div>
<div class="ch" style="left:1491px;width:30px;color:#444;">AV</div>
<div style="left:131px;top:75px;width:1362px;height:1px;background:#b1b1b1"></div>
<div style="left:97px;top:75px;width:34px;height:1px;background:#d4d4d4"></div>
<div style="left:839px;top:73px;width:149px;height:2px;background:#217346"></div>
<svg style="position:absolute;left:112px;top:56px" width="16" height="16"><polygon points="16,0 16,16 0,16" fill="#dfdfdf"/></svg>
<div style="left:0px;top:76px;width:131px;height:719px;background:#fff"></div>
<div style="left:97px;top:142px;width:34px;height:653px;background:#fff"></div>
<div style="left:97px;top:167px;width:34px;height:1px;background:#d4d4d4"></div>
<div style="left:97px;top:193px;width:34px;height:1px;background:#d4d4d4"></div>
<div style="left:97px;top:219px;width:34px;height:1px;background:#d4d4d4"></div>
<div style="left:97px;top:245px;width:34px;height:1px;background:#d4d4d4"></div>
<div style="left:97px;top:271px;width:34px;height:1px;background:#d4d4d4"></div>
<div style="left:97px;top:297px;width:34px;height:1px;background:#d4d4d4"></div>
<div style="left:97px;top:323px;width:34px;height:1px;background:#d4d4d4"></div>
<div style="left:97px;top:349px;width:34px;height:1px;background:#d4d4d4"></div>
<div style="left:97px;top:375px;width:34px;height:1px;background:#d4d4d4"></div>
<div style="left:97px;top:401px;width:34px;height:1px;background:#d4d4d4"></div>
<div style="left:97px;top:427px;width:34px;height:1px;background:#d4d4d4"></div>
<div style="left:97px;top:453px;width:34px;height:1px;background:#d4d4d4"></div>
<div style="left:97px;top:479px;width:34px;height:1px;background:#d4d4d4"></div>
<div style="left:97px;top:505px;width:34px;height:1px;background:#d4d4d4"></div>
<div style="left:97px;top:531px;width:34px;height:1px;background:#d4d4d4"></div>
<div style="left:97px;top:557px;width:34px;height:1px;background:#d4d4d4"></div>
<div style="left:97px;top:583px;width:34px;height:1px;background:#d4d4d4"></div>
<div style="left:97px;top:609px;width:34px;height:1px;background:#d4d4d4"></div>
<div style="left:97px;top:635px;width:34px;height:1px;background:#d4d4d4"></div>
<div style="left:97px;top:661px;width:34px;height:1px;background:#d4d4d4"></div>
<div style="left:97px;top:687px;width:34px;height:1px;background:#d4d4d4"></div>
<div style="left:97px;top:713px;width:34px;height:1px;background:#d4d4d4"></div>
<div style="left:97px;top:739px;width:34px;height:1px;background:#d4d4d4"></div>
<div style="left:97px;top:765px;width:34px;height:1px;background:#d4d4d4"></div>
<div style="left:97px;top:791px;width:34px;height:1px;background:#d4d4d4"></div>
<div style="left:97px;top:817px;width:34px;height:1px;background:#d4d4d4"></div>
<div class="rh" style="top:148px;">5</div>
<div class="rh" style="top:174px;">6</div>
<div class="rh" style="top:200px;">7</div>
<div class="rh" style="top:226px;">8</div>
<div class="rh" style="top:252px;">9</div>
<div class="rh" style="top:278px;">10</div>
<div class="rh" style="top:304px;">11</div>
<div class="rh" style="top:330px;">12</div>
<div class="rh" style="top:356px;">13</div>
<div class="rh" style="top:382px;">14</div>
<div class="rh" style="top:408px;">15</div>
<div class="rh" style="top:434px;">16</div>
<div class="rh" style="top:460px;">17</div>
<div class="rh" style="top:486px;">18</div>
<div class="rh" style="top:512px;">19</div>
<div style="left:97px;top:532px;width:34px;height:25px;background:#e1e1e1"></div>
<div class="rh" style="top:538px;color:#217346;font-weight:bold;">20</div>
<div class="rh" style="top:564px;">21</div>
<div class="rh" style="top:590px;">22</div>
<div class="rh" style="top:616px;">23</div>
<div class="rh" style="top:642px;">31</div>
<div class="rh" style="top:668px;">41</div>
<div class="rh" style="top:694px;">51</div>
<div class="rh" style="top:720px;">53</div>
<div class="rh" style="top:746px;">54</div>
<div class="rh" style="top:772px;">59</div>
<div class="rh" style="top:798px;"></div>
<div style="left:97px;top:633px;width:34px;height:1px;background:#dedede"></div>
<div style="left:97px;top:637px;width:34px;height:1px;background:#dedede"></div>
<div style="left:97px;top:635px;width:34px;height:1px;background:#fff"></div>
<div style="left:97px;top:659px;width:34px;height:1px;background:#dedede"></div>
<div style="left:97px;top:663px;width:34px;height:1px;background:#dedede"></div>
<div style="left:97px;top:661px;width:34px;height:1px;background:#fff"></div>
<div style="left:97px;top:685px;width:34px;height:1px;background:#dedede"></div>
<div style="left:97px;top:689px;width:34px;height:1px;background:#dedede"></div>
<div style="left:97px;top:687px;width:34px;height:1px;background:#fff"></div>
<div style="left:97px;top:711px;width:34px;height:1px;background:#dedede"></div>
<div style="left:97px;top:715px;width:34px;height:1px;background:#dedede"></div>
<div style="left:97px;top:713px;width:34px;height:1px;background:#fff"></div>
<div style="left:97px;top:763px;width:34px;height:1px;background:#dedede"></div>
<div style="left:97px;top:767px;width:34px;height:1px;background:#dedede"></div>
<div style="left:97px;top:765px;width:34px;height:1px;background:#fff"></div>
<div class="rh" style="top:122px">2</div>
<div style="left:131px;top:76px;width:1px;height:719px;background:#9c9c9c"></div>
<div style="left:130px;top:531px;width:2px;height:27px;background:#217346"></div>
<div style="left:0px;top:141px;width:1493px;height:1px;background:#9c9c9c"></div>
<div style="left:1189px;top:0px;width:1px;height:795px;background:#9c9c9c"></div>
<svg style="position:absolute;left:167px;top:76px" width="6" height="6"><polygon points="0,0 6,0 6,6" fill="#ff0000"/></svg>
<svg style="position:absolute;left:222px;top:76px" width="6" height="6"><polygon points="0,0 6,0 6,6" fill="#ff0000"/></svg>
<svg style="position:absolute;left:248px;top:76px" width="6" height="6"><polygon points="0,0 6,0 6,6" fill="#ff0000"/></svg>
<svg style="position:absolute;left:469px;top:76px" width="6" height="6"><polygon points="0,0 6,0 6,6" fill="#ff0000"/></svg>
<svg style="position:absolute;left:490px;top:76px" width="6" height="6"><polygon points="0,0 6,0 6,6" fill="#ff0000"/></svg>
<svg style="position:absolute;left:529px;top:76px" width="6" height="6"><polygon points="0,0 6,0 6,6" fill="#ff0000"/></svg>
<svg style="position:absolute;left:575px;top:76px" width="6" height="6"><polygon points="0,0 6,0 6,6" fill="#ff0000"/></svg>
<svg style="position:absolute;left:617px;top:76px" width="6" height="6"><polygon points="0,0 6,0 6,6" fill="#ff0000"/></svg>
<svg style="position:absolute;left:659px;top:76px" width="6" height="6"><polygon points="0,0 6,0 6,6" fill="#ff0000"/></svg>
<svg style="position:absolute;left:696px;top:76px" width="6" height="6"><polygon points="0,0 6,0 6,6" fill="#ff0000"/></svg>
<svg style="position:absolute;left:741px;top:76px" width="6" height="6"><polygon points="0,0 6,0 6,6" fill="#ff0000"/></svg>
<svg style="position:absolute;left:785px;top:76px" width="6" height="6"><polygon points="0,0 6,0 6,6" fill="#ff0000"/></svg>
<svg style="position:absolute;left:833px;top:76px" width="6" height="6"><polygon points="0,0 6,0 6,6" fill="#ff0000"/></svg>
<svg style="position:absolute;left:981px;top:76px" width="6" height="6"><polygon points="0,0 6,0 6,6" fill="#ff0000"/></svg>
<svg style="position:absolute;left:1157px;top:76px" width="6" height="6"><polygon points="0,0 6,0 6,6" fill="#ff0000"/></svg>
<svg style="position:absolute;left:1183px;top:76px" width="6" height="6"><polygon points="0,0 6,0 6,6" fill="#ff0000"/></svg>
<svg style="position:absolute;left:1304px;top:76px" width="6" height="6"><polygon points="0,0 6,0 6,6" fill="#ff0000"/></svg>
<svg style="position:absolute;left:840px;top:506px" width="6" height="6"><polygon points="0,0 6,0 0,6" fill="#008000"/></svg>
<svg style="position:absolute;left:840px;top:636px" width="6" height="6"><polygon points="0,0 6,0 0,6" fill="#008000"/></svg>
<svg style="position:absolute;left:840px;top:662px" width="6" height="6"><polygon points="0,0 6,0 0,6" fill="#008000"/></svg>
<svg style="position:absolute;left:840px;top:688px" width="6" height="6"><polygon points="0,0 6,0 0,6" fill="#008000"/></svg>
<div style="left:838px;top:530px;width:147px;height:25px;border:2px solid #217346"></div>
<div style="left:984px;top:554px;width:5px;height:5px;background:#217346;border:1px solid #fff"></div>
<div class="ob" style="left:2px;top:52px;width:23px;height:23px">1</div>
<div class="ob" style="left:25px;top:52px;width:23px;height:23px">2</div>
<div class="ob" style="left:48px;top:52px;width:23px;height:23px">3</div>
<div class="ob" style="left:71px;top:52px;width:23px;height:23px">4</div>
<div class="ob" style="left:103px;top:3px;width:23px;height:23px">1</div>
<div class="ob" style="left:103px;top:26px;width:23px;height:23px">2</div>
<div style="left:10px;top:169px;width:2px;height:626px;background:#a6a6a6"></div>
<div style="left:10px;top:169px;width:6px;height:2px;background:#a6a6a6"></div>
<div style="left:33px;top:195px;width:2px;height:78px;background:#a6a6a6"></div>
<div style="left:33px;top:195px;width:6px;height:2px;background:#a6a6a6"></div>
<div style="left:33px;top:299px;width:2px;height:286px;background:#a6a6a6"></div>
<div style="left:33px;top:299px;width:6px;height:2px;background:#a6a6a6"></div>
<div style="left:33px;top:611px;width:2px;height:130px;background:#a6a6a6"></div>
<div style="left:33px;top:611px;width:6px;height:2px;background:#a6a6a6"></div>
<div style="left:56px;top:221px;width:2px;height:26px;background:#a6a6a6"></div>
<div style="left:56px;top:221px;width:6px;height:2px;background:#a6a6a6"></div>
<div style="left:56px;top:325px;width:2px;height:182px;background:#a6a6a6"></div>
<div style="left:56px;top:325px;width:6px;height:2px;background:#a6a6a6"></div>
<div style="left:56px;top:533px;width:2px;height:26px;background:#a6a6a6"></div>
<div style="left:56px;top:533px;width:6px;height:2px;background:#a6a6a6"></div>
<div style="left:33px;top:180px;width:2px;height:2px;background:#8a8a8a"></div>
<div style="left:56px;top:206px;width:2px;height:2px;background:#8a8a8a"></div>
<div style="left:56px;top:310px;width:2px;height:2px;background:#8a8a8a"></div>
<div style="left:56px;top:622px;width:2px;height:2px;background:#8a8a8a"></div>
<div style="left:79px;top:232px;width:2px;height:2px;background:#8a8a8a"></div>
<div style="left:79px;top:336px;width:2px;height:2px;background:#8a8a8a"></div>
<div style="left:79px;top:362px;width:2px;height:2px;background:#8a8a8a"></div>
<div style="left:79px;top:388px;width:2px;height:2px;background:#8a8a8a"></div>
<div style="left:79px;top:414px;width:2px;height:2px;background:#8a8a8a"></div>
<div style="left:79px;top:440px;width:2px;height:2px;background:#8a8a8a"></div>
<div style="left:79px;top:466px;width:2px;height:2px;background:#8a8a8a"></div>
<div style="left:79px;top:492px;width:2px;height:2px;background:#8a8a8a"></div>
<div style="left:79px;top:544px;width:2px;height:2px;background:#8a8a8a"></div>
<div class="ob" style="left:48px;top:247px;width:23px;height:23px"></div>
<div style="left:56px;top:258px;width:8px;height:2px;background:#555"></div>
<div class="ob" style="left:48px;top:507px;width:23px;height:23px"></div>
<div style="left:56px;top:518px;width:8px;height:2px;background:#555"></div>
<div class="ob" style="left:48px;top:559px;width:23px;height:23px"></div>
<div style="left:56px;top:570px;width:8px;height:2px;background:#555"></div>
<div class="ob" style="left:48px;top:637px;width:23px;height:23px"></div>
<div style="left:56px;top:648px;width:8px;height:2px;background:#555"></div>
<div style="left:59px;top:645px;width:2px;height:8px;background:#555"></div>
<div class="ob" style="left:48px;top:663px;width:23px;height:23px"></div>
<div style="left:56px;top:674px;width:8px;height:2px;background:#555"></div>
<div style="left:59px;top:671px;width:2px;height:8px;background:#555"></div>
<div class="ob" style="left:48px;top:689px;width:23px;height:23px"></div>
<div style="left:56px;top:700px;width:8px;height:2px;background:#555"></div>
<div style="left:59px;top:697px;width:2px;height:8px;background:#555"></div>
<div class="ob" style="left:48px;top:715px;width:23px;height:23px"></div>
<div style="left:56px;top:726px;width:8px;height:2px;background:#555"></div>
<div style="left:59px;top:723px;width:2px;height:8px;background:#555"></div>
<div class="ob" style="left:25px;top:273px;width:23px;height:23px"></div>
<div style="left:33px;top:284px;width:8px;height:2px;background:#555"></div>
<div class="ob" style="left:25px;top:585px;width:23px;height:23px"></div>
<div style="left:33px;top:596px;width:8px;height:2px;background:#555"></div>
<div class="ob" style="left:25px;top:741px;width:23px;height:23px"></div>
<div style="left:33px;top:752px;width:8px;height:2px;background:#555"></div>
<div class="ob" style="left:25px;top:767px;width:23px;height:23px"></div>
<div style="left:33px;top:778px;width:8px;height:2px;background:#555"></div>
<div style="left:36px;top:775px;width:2px;height:8px;background:#555"></div>
<div style="left:583px;top:11px;width:481px;height:2px;background:#a6a6a6"></div>
<div style="left:583px;top:11px;width:2px;height:6px;background:#a6a6a6"></div>
<div style="left:602px;top:34px;width:2px;height:2px;background:#8a8a8a"></div>
<div style="left:644px;top:34px;width:2px;height:2px;background:#8a8a8a"></div>
<div style="left:683px;top:34px;width:2px;height:2px;background:#8a8a8a"></div>
<div style="left:724px;top:34px;width:2px;height:2px;background:#8a8a8a"></div>
<div style="left:769px;top:34px;width:2px;height:2px;background:#8a8a8a"></div>
<div style="left:815px;top:34px;width:2px;height:2px;background:#8a8a8a"></div>
<div style="left:913px;top:34px;width:2px;height:2px;background:#8a8a8a"></div>
<div class="ob" style="left:1064px;top:3px;width:23px;height:23px"></div>
<div style="left:1072px;top:14px;width:8px;height:2px;background:#555"></div>
<div class="ob" style="left:1165px;top:3px;width:23px;height:23px"></div>
<div style="left:1173px;top:14px;width:8px;height:2px;background:#555"></div>
<div style="left:1176px;top:11px;width:2px;height:8px;background:#555"></div>
<div style="left:1312px;top:11px;width:181px;height:2px;background:#a6a6a6"></div>
<div style="left:1312px;top:11px;width:2px;height:6px;background:#a6a6a6"></div>
<div style="left:1325px;top:34px;width:2px;height:2px;background:#8a8a8a"></div>
<div style="left:1355px;top:34px;width:2px;height:2px;background:#8a8a8a"></div>
<div style="left:1385px;top:34px;width:2px;height:2px;background:#8a8a8a"></div>
<div style="left:1415px;top:34px;width:2px;height:2px;background:#8a8a8a"></div>
<div style="left:1445px;top:34px;width:2px;height:2px;background:#8a8a8a"></div>
<div style="left:1475px;top:34px;width:2px;height:2px;background:#8a8a8a"></div></body></html>
